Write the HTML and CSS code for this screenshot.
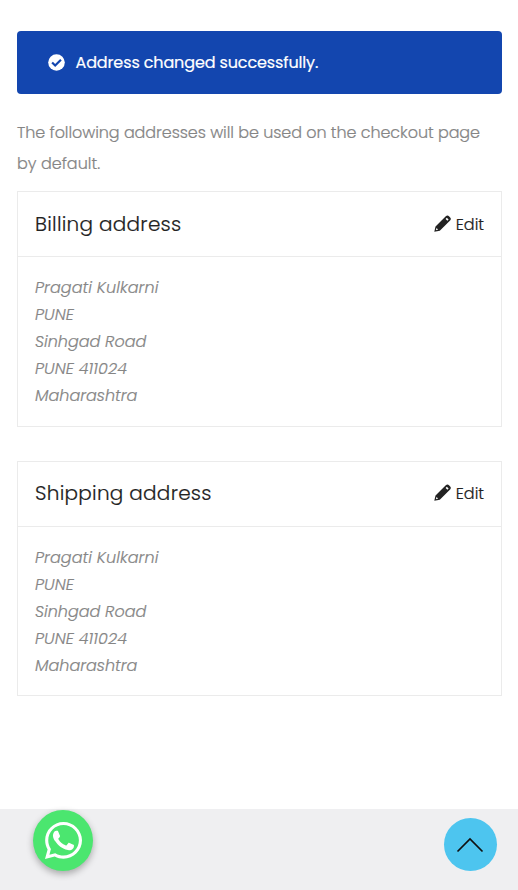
FILE: index.html
```
<!DOCTYPE html>
<html lang="en">
<head>
<meta charset="utf-8">
<meta name="viewport" content="width=device-width, initial-scale=1">
<title>Addresses</title>
<link rel="stylesheet" href="styles.css">
</head>
<body>
<main class="account">
  <div class="notice" role="alert">
    <svg class="notice-icon" viewBox="0 0 512 512"><circle cx="256" cy="256" r="250" fill="currentColor"/><path d="M124 256l92 90 174-174" fill="none" stroke="#1346af" stroke-width="66"/></svg>
    <span class="notice-text">Address changed successfully.</span>
  </div>
  <p class="intro"><span class="intro-first">The following addresses will be used on the checkout page</span><br><span class="intro-last">by default.</span></p>
  <section class="card">
    <header class="card-head">
      <h3 class="billing">Billing address</h3>
      <a class="edit"><svg class="pencil" viewBox="0 0 17 17"><path fill="currentColor" fill-rule="evenodd" d="M.3 16.700L1.500 11.600 11.800 1.300c1-1 2.300-1 3.200-.1l1.200 1.200c.9.9.8 2.200-.1 3.200L5.800 15.800zM1.900 15.200l2.300-.6-1.700-1.700zM12.800 2.800l1.800 1.800-1.200 1.200-1.800-1.800z"/></svg><span>Edit</span></a>
    </header>
    <address><span class="name">Pragati Kulkarni</span><span class="city">PUNE</span><span class="road">Sinhgad Road</span><span class="postcode">PUNE 411024</span><span class="state">Maharashtra</span></address>
  </section>
  <section class="card card-shipping">
    <header class="card-head">
      <h3 class="shipping">Shipping address</h3>
      <a class="edit"><svg class="pencil" viewBox="0 0 17 17"><path fill="currentColor" fill-rule="evenodd" d="M.3 16.700L1.500 11.600 11.800 1.300c1-1 2.300-1 3.200-.1l1.200 1.200c.9.9.8 2.200-.1 3.200L5.800 15.800zM1.900 15.200l2.300-.6-1.700-1.700zM12.800 2.800l1.800 1.800-1.200 1.200-1.800-1.800z"/></svg><span>Edit</span></a>
    </header>
    <address><span class="name">Pragati Kulkarni</span><span class="city">PUNE</span><span class="road">Sinhgad Road</span><span class="postcode">PUNE 411024</span><span class="state">Maharashtra</span></address>
  </section>
</main>
<footer class="footer">
  <a class="whatsapp" aria-label="WhatsApp"><svg viewBox="0 0 448 512"><path fill="currentColor" d="M380.900 97.100C339 55.100 283.200 32 223.900 32c-122.400 0-222 99.600-222 222 0 39.100 10.200 77.300 29.600 111L0 480l117.700-30.900c32.400 17.700 68.900 27 106.100 27h.1c122.300 0 224.100-99.600 224.100-222 0-59.300-25.200-115-67.100-157zm-157 341.600c-33.200 0-65.700-8.900-94-25.700l-6.700-4-69.800 18.300L72 359.200l-4.400-7c-18.500-29.400-28.200-63.300-28.200-98.200 0-101.700 82.800-184.500 184.600-184.500 49.300 0 95.600 19.200 130.400 54.100 34.800 34.900 56.200 81.200 56.100 130.500 0 101.800-84.900 184.600-186.600 184.600z"/><path fill="currentColor" transform="translate(224 250) scale(1.130) translate(-224 -251)" d="M325.100 300.500c-5.500-2.800-32.800-16.200-37.900-18-5.100-1.900-8.800-2.800-12.500 2.800-3.700 5.600-14.300 18-17.600 21.800-3.200 3.700-6.500 4.200-12 1.400-32.600-16.300-54-29.100-75.500-66-5.700-9.800 5.700-9.100 16.300-30.300 1.800-3.700.9-6.900-.5-9.700-1.400-2.800-12.500-30.100-17.100-41.200-4.500-10.800-9.100-9.300-12.500-9.500-3.200-.2-6.900-.2-10.600-.2-3.700 0-9.700 1.400-14.800 6.900-5.100 5.600-19.400 19-19.400 46.300 0 27.300 19.900 53.700 22.600 57.400 2.800 3.700 39.100 59.700 94.800 83.800 35.200 15.200 49 16.500 66.600 13.900 10.700-1.600 32.800-13.400 37.400-26.400 4.600-13 4.600-24.100 3.200-26.400-1.300-2.500-5-3.900-10.500-6.600z"/></svg></a>
  <a class="to-top" aria-label="Back to top"><svg viewBox="0 0 28 16"><path d="M1.500 14.500L14 2l12.500 12.500" fill="none" stroke="currentColor" stroke-width="1.700"/></svg></a>
</footer>
</body>
</html>
```
FILE: styles.css
```
* { box-sizing: border-box; }
body {
  margin: 0;
  min-height: 890px;
  display: flex;
  flex-direction: column;
  background: #fff;
  color: #858585;
  font: 300 16px/27px Poppins, Inter, sans-serif;
  -webkit-text-stroke: .2px currentColor;
  white-space: nowrap;
}
.account { padding: 31px 16px 0 17px; }
.notice {
  height: 63px;
  padding-left: 31px;
  display: flex;
  align-items: center;
  gap: 10.500px;
  border-radius: 4px;
  background: #1346af;
  color: #fff;
  font-weight: 400;
}
.notice-icon { width: 17px; height: 17px; }
.notice-text { letter-spacing: -.13px; }
.intro { margin: 23px 0 12px; line-height: 31px; }
.intro-first { letter-spacing: -.07px; }
.card { height: 236px; border: 1px solid #ebebeb; }
.card-shipping { height: 235px; margin-top: 34px; }
.card-head {
  height: 65px;
  padding: 0 17px;
  display: flex;
  align-items: center;
  justify-content: space-between;
  border-bottom: 1px solid #ebebeb;
  color: #222;
}
.card-shipping .card-head { padding-bottom: 2px; }
h3 { margin: 0; font-size: 20px; font-weight: 300; letter-spacing: .27px; }
.edit { display: flex; align-items: center; gap: 5px; }
.pencil { width: 17px; height: 17px; margin-top: -2px; }
.card-shipping .pencil { margin-top: -1px; }
address { padding: 17px; }
address span { display: block; width: max-content; }
.name, .postcode, .city { letter-spacing: .07px; }
.footer {
  height: 81px;
  margin-top: auto;
  padding: 1px 21px 0 33px;
  display: flex;
  justify-content: space-between;
  background: #efeff1;
}
.whatsapp {
  width: 60px;
  height: 61px;
  display: grid;
  place-items: center;
  border-radius: 50%;
  background: #4be66f;
  color: #fff;
  box-shadow: 0 3px 7px rgba(0, 0, 0, .3);
}
.whatsapp svg { width: 37px; height: 43px; }
.to-top {
  width: 53px;
  height: 53px;
  margin-top: 8px;
  display: grid;
  place-items: center;
  border-radius: 50%;
  background: #4dc5ef;
  color: #111;
}
.to-top svg { width: 28px; height: 16px; margin-right: 1px; }
```
